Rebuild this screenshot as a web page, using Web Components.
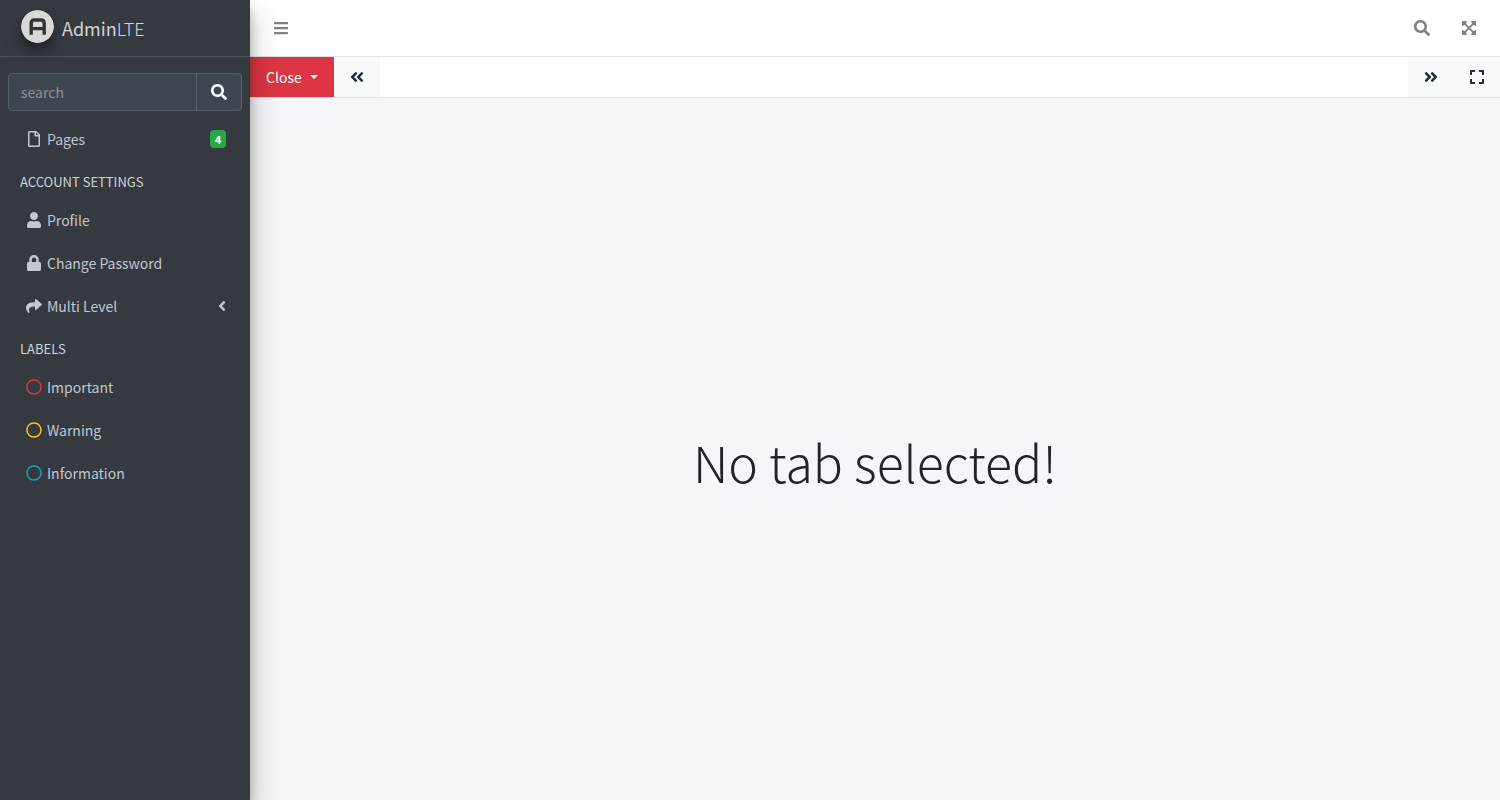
<!DOCTYPE html>
<html lang="en">
<head>
<meta charset="utf-8">
<meta name="viewport" content="width=device-width, initial-scale=1">
<title>AdminLTE</title>
<style>
  html, body { margin: 0; min-height: 100vh; }
  body {
    font-family: "Source Sans Pro", "Noto Sans CJK SC", "Noto Sans", sans-serif;
    font-size: 14px;
    line-height: 24px;
    color: #212529;
    background: #f4f6f9;
  }
</style>
</head>
<body>
<admin-layout>
  <admin-sidebar slot="sidebar">
    <nav-item icon="file" badge="4">Pages</nav-item>
    <nav-heading>ACCOUNT SETTINGS</nav-heading>
    <nav-item icon="user">Profile</nav-item>
    <nav-item icon="lock">Change Password</nav-item>
    <nav-item icon="share" expandable>Multi Level</nav-item>
    <nav-heading>LABELS</nav-heading>
    <nav-item icon="circle" tone="danger">Important</nav-item>
    <nav-item icon="circle" tone="warning">Warning</nav-item>
    <nav-item icon="circle" tone="info">Information</nav-item>
  </admin-sidebar>
  <top-navbar></top-navbar>
  <tab-bar></tab-bar>
  <empty-state>No tab selected!</empty-state>
</admin-layout>

<script>
const ICONS = {
  bars: [448, 'M16 132h416c8.8 0 16-7.2 16-16V76c0-8.8-7.2-16-16-16H16C7.2 60 0 67.2 0 76v40c0 8.8 7.2 16 16 16zm0 160h416c8.8 0 16-7.2 16-16v-40c0-8.8-7.2-16-16-16H16c-8.8 0-16 7.2-16 16v40c0 8.8 7.2 16 16 16zm0 160h416c8.8 0 16-7.2 16-16v-40c0-8.8-7.2-16-16-16H16c-8.8 0-16 7.2-16 16v40c0 8.8 7.2 16 16 16z'],
  search: [512, 'M505 442.7L405.3 343c-4.5-4.5-10.6-7-17-7H372c27.6-35.3 44-79.7 44-128C416 93.1 322.9 0 208 0S0 93.1 0 208s93.1 208 208 208c48.3 0 92.7-16.4 128-44v16.3c0 6.4 2.5 12.5 7 17l99.7 99.7c9.4 9.4 24.6 9.4 33.9 0l28.3-28.3c9.4-9.4 9.4-24.6.1-34zM208 336c-70.7 0-128-57.2-128-128 0-70.7 57.2-128 128-128 70.7 0 128 57.2 128 128 0 70.7-57.2 128-128 128z'],
  arrows: [448, 'M448 344v112a23.94 23.94 0 0 1-24 24H312c-21.39 0-32.09-25.9-17-41l36.2-36.2L224 295.6 116.77 402.9 153 439c15.09 15.1 4.39 41-17 41H24a23.94 23.94 0 0 1-24-24V344c0-21.4 25.89-32.1 41-17l36.19 36.2L184.46 256 77.18 148.7 41 185c-15.1 15.1-41 4.4-41-17V56a23.94 23.94 0 0 1 24-24h112c21.39 0 32.09 25.9 17 41l-36.2 36.2L224 216.4l107.23-107.3L295 73c-15.09-15.1-4.39-41 17-41h112a23.94 23.94 0 0 1 24 24v112c0 21.4-25.89 32.1-41 17l-36.19-36.2L263.54 256l107.28 107.3L407 327.1c15.1-15.2 41-4.5 41 16.9z'],
  expand: [448, 'M0 180V56c0-13.3 10.7-24 24-24h124c6.6 0 12 5.4 12 12v40c0 6.6-5.4 12-12 12H64v84c0 6.6-5.4 12-12 12H12c-6.6 0-12-5.4-12-12zM288 44v40c0 6.6 5.4 12 12 12h84v84c0 6.6 5.4 12 12 12h40c6.6 0 12-5.4 12-12V56c0-13.3-10.7-24-24-24H300c-6.6 0-12 5.4-12 12zm148 276h-40c-6.6 0-12 5.4-12 12v84h-84c-6.6 0-12 5.4-12 12v40c0 6.6 5.4 12 12 12h124c13.3 0 24-10.7 24-24V332c0-6.6-5.4-12-12-12zM160 468v-40c0-6.6-5.4-12-12-12H64v-84c0-6.6-5.4-12-12-12H12c-6.6 0-12 5.4-12 12v124c0 13.3 10.7 24 24 24h124c6.6 0 12-5.4 12-12z'],
  left2: [448, 'M223.7 239l136-136c9.4-9.4 24.6-9.4 33.9 0l22.6 22.6c9.4 9.4 9.4 24.6 0 33.9L319.9 256l96.4 96.4c9.4 9.4 9.4 24.6 0 33.9L393.7 409c-9.4 9.4-24.6 9.4-33.9 0l-136-136c-9.5-9.4-9.5-24.6-.1-34zm-192 34l136 136c9.4 9.4 24.6 9.4 33.9 0l22.6-22.6c9.4-9.4 9.4-24.6 0-33.9L127.9 256l96.4-96.4c9.4-9.4 9.4-24.6 0-33.9L201.7 103c-9.4-9.4-24.6-9.4-33.9 0l-136 136c-9.5 9.4-9.5 24.6-.1 34z'],
  right2: [448, 'M224.3 273l-136 136c-9.4 9.4-24.6 9.4-33.9 0l-22.6-22.6c-9.4-9.4-9.4-24.6 0-33.9l96.4-96.4-96.4-96.4c-9.4-9.4-9.4-24.6 0-33.9L54.3 103c9.4-9.4 24.6-9.4 33.9 0l136 136c9.5 9.4 9.5 24.6.1 34zm192-34l-136-136c-9.4-9.4-24.6-9.4-33.9 0l-22.6 22.6c-9.4 9.4-9.4 24.6 0 33.9l96.4 96.4-96.4 96.4c-9.4 9.4-9.4 24.6 0 33.9l22.6 22.6c9.4 9.4 24.6 9.4 33.9 0l136-136c9.4-9.2 9.4-24.4 0-33.8z'],
  left: [256, 'M31.7 239l136-136c9.4-9.4 24.6-9.4 33.9 0l22.6 22.6c9.4 9.4 9.4 24.6 0 33.9L127.9 256l96.4 96.4c9.4 9.4 9.4 24.6 0 33.9L201.7 409c-9.4 9.4-24.6 9.4-33.9 0l-136-136c-9.5-9.4-9.5-24.6-.1-34z'],
  file: [384, 'M369.9 97.9L286 14C277 5 264.8-.1 252.1-.1H48C21.5 0 0 21.5 0 48v416c0 26.500 21.500 48 48 48h288c26.500 0 48-21.500 48-48V131.900c0-12.700-5.100-25-14.100-34zM332.100 128H256V51.900l76.100 76.100zM48 464V48h160v104c0 13.300 10.700 24 24 24h104v288H48z'],
  user: [448, 'M224 256c70.7 0 128-57.300 128-128S294.700 0 224 0 96 57.300 96 128s57.300 128 128 128zm89.600 32h-16.700c-22.200 10.200-46.900 16-72.900 16s-50.600-5.800-72.900-16h-16.700C60.200 288 0 348.200 0 422.400V464c0 26.500 21.500 48 48 48h352c26.500 0 48-21.500 48-48v-41.600c0-74.200-60.200-134.400-134.400-134.400z'],
  lock: [448, 'M400 224h-24v-72C376 68.200 307.800 0 224 0S72 68.200 72 152v72H48c-26.500 0-48 21.500-48 48v192c0 26.500 21.500 48 48 48h352c26.500 0 48-21.500 48-48V272c0-26.500-21.500-48-48-48zm-104 0H152v-72c0-39.700 32.300-72 72-72s72 32.300 72 72v72z'],
  share: [512, 'M503.691 189.836L327.687 37.851C312.281 24.546 288 35.347 288 56.015v80.053C127.371 137.907 0 170.100 0 322.326c0 61.441 39.581 122.309 83.333 154.132 13.653 9.931 33.111-2.533 28.077-18.631C66.066 312.814 132.917 274.316 288 272.085V360c0 20.700 24.300 31.453 39.687 18.164l176.004-152c11.071-9.562 11.086-26.753 0-36.328z'],
  circle: [512, 'M256 8C119 8 8 119 8 256s111 248 248 248 248-111 248-248S393 8 256 8zm0 448c-110.500 0-200-89.500-200-200S145.500 56 256 56s200 89.500 200 200-89.500 200-200 200z']
};

class ShadowElement extends HTMLElement {
  connectedCallback() {
    if (this.shadowRoot) return;
    this.attachShadow({ mode: 'open' }).innerHTML = this.view();
  }
}

customElements.define('fa-icon', class extends ShadowElement {
  view() {
    const [w, d] = ICONS[this.getAttribute('name')];
    return `<style>:host{display:inline-flex;flex:none}svg{display:block;height:16px;fill:currentColor}</style>
      <svg viewBox="0 0 ${w} 512" width="${w / 32}" aria-hidden="true"><path d="${d}"/></svg>`;
  }
});

customElements.define('admin-layout', class extends ShadowElement {
  view() {
    return `<style>
      :host{display:flex;min-height:100vh}
      ::slotted(admin-sidebar){flex:none}
      main{flex:1;min-width:0;display:flex;flex-direction:column}
    </style>
    <slot name="sidebar"></slot><main><slot></slot></main>`;
  }
});

customElements.define('brand-link', class extends ShadowElement {
  view() {
    return `<style>
      :host{display:block;border-bottom:1px solid #4b545c}
      a{display:flex;align-items:center;gap:8px;height:56px;padding-left:21px;
        font-size:18px;color:rgba(255,255,255,.8);text-decoration:none}
      svg{flex:none;width:33px;height:33px;margin-bottom:3px;border-radius:50%;
        box-shadow:0 10px 20px rgba(0,0,0,.19),0 6px 6px rgba(0,0,0,.23)}
      .thin{font-weight:300}
    </style>
    <a href="#"><svg viewBox="0 0 33 33" aria-hidden="true">
      <circle cx="16.500" cy="16.500" r="16.500" fill="#d8d9da"/>
      <path d="M10.200 24.800V13.200Q10.200 10 13.400 10H20Q23.200 10 23.200 13.200V24.800M10.200 18.600H23.200" fill="none" stroke="#303335" stroke-width="3.400"/>
      <path d="M11 12.300Q11.300 11 13 11H20.400Q22.100 11 22.400 12.300" fill="none" stroke="#55585a" stroke-width=".6"/>
    </svg><span>Admin<span class="thin">LTE</span></span></a>`;
  }
});

customElements.define('sidebar-search', class extends ShadowElement {
  view() {
    return `<style>
      :host{display:block}
      form{display:flex;height:36px;margin:0;border:1px solid #56606a;border-radius:4px;background:#3f474e;overflow:hidden}
      input{flex:1;min-width:0;border:0;padding:0 12px;background:none;font:inherit;color:#fff;outline:0}
      input::placeholder{color:#8b9298;opacity:1}
      button{display:flex;align-items:center;justify-content:center;width:45px;padding:0;border:0;
        border-left:1px solid #56606a;background:none;color:#fff}
    </style>
    <form role="search"><input type="search" placeholder="search" aria-label="Search">
    <button type="button" aria-label="Search"><fa-icon name="search"></fa-icon></button></form>`;
  }
});

customElements.define('nav-heading', class extends ShadowElement {
  view() {
    return `<style>:host{display:block;padding:8px 12px 6px;font-size:13px;color:#d0d4db}</style><slot></slot>`;
  }
});

customElements.define('nav-item', class extends ShadowElement {
  view() {
    const badge = this.getAttribute('badge');
    return `<style>
      :host{display:block;margin-bottom:3px}
      a{display:flex;align-items:center;height:40px;padding:0 16px;color:#c2c7d0;text-decoration:none}
      .icon{display:flex;justify-content:center;width:20px;margin-right:3px}
      .text{flex:1}
      :host([tone=danger]) .icon{color:#dc3545}
      :host([tone=warning]) .icon{color:#ffc107}
      :host([tone=info]) .icon{color:#17a2b8}
      .badge{width:16px;height:18px;border-radius:4px;background:#28a745;color:#fff;
        font-size:11px;font-weight:700;line-height:18px;text-align:center}
    </style>
    <a href="#"><span class="icon"><fa-icon name="${this.getAttribute('icon')}"></fa-icon></span>
      <span class="text"><slot></slot></span>
      ${badge ? `<span class="badge">${badge}</span>` : ''}
      ${this.hasAttribute('expandable') ? '<fa-icon name="left"></fa-icon>' : ''}</a>`;
  }
});

customElements.define('admin-sidebar', class extends ShadowElement {
  view() {
    return `<style>
      :host{display:block;position:relative;z-index:1;width:250px;background:#343a40;
        box-shadow:0 14px 28px rgba(0,0,0,.25),0 10px 10px rgba(0,0,0,.22)}
      .body{padding:16px 8px 0}
      nav{margin-top:8px}
    </style>
    <brand-link></brand-link>
    <div class="body"><sidebar-search></sidebar-search><nav><slot></slot></nav></div>`;
  }
});

customElements.define('top-navbar', class extends ShadowElement {
  view() {
    return `<style>
      :host{display:flex;align-items:center;justify-content:space-between;height:56px;padding:0 8px;
        background:#fff;border-bottom:1px solid #dee2e6}
      div{display:flex}
      button{display:flex;padding:12px 16px;border:0;background:none;color:#808080}
    </style>
    <button type="button" aria-label="Toggle menu"><fa-icon name="bars"></fa-icon></button>
    <div><button type="button" aria-label="Search"><fa-icon name="search"></fa-icon></button>
    <button type="button" aria-label="Full screen"><fa-icon name="arrows"></fa-icon></button></div>`;
  }
});

customElements.define('tab-bar', class extends ShadowElement {
  view() {
    return `<style>
      :host{display:flex;height:40px;background:#fff;border-bottom:1px solid #dee2e6}
      button{display:flex;align-items:center;padding:0 16px;border:0;background:#f8f9fa;color:#1f2d3d;font:inherit}
      .close{gap:8px;background:#dc3545;color:#fff}
      .caret{border:4px solid transparent;border-top-color:#fff;border-bottom:0}
      .tabs{flex:1}
    </style>
    <button class="close" type="button" aria-haspopup="true">Close<span class="caret"></span></button>
    <button type="button" aria-label="Scroll left"><fa-icon name="left2"></fa-icon></button>
    <div class="tabs" role="tablist"></div>
    <button type="button" aria-label="Scroll right"><fa-icon name="right2"></fa-icon></button>
    <button type="button" aria-label="Expand"><fa-icon name="expand"></fa-icon></button>`;
  }
});

customElements.define('empty-state', class extends ShadowElement {
  view() {
    return `<style>
      :host{flex:1;display:flex;align-items:center;justify-content:center;padding-top:24px}
      h2{margin:0;font-size:50px;font-weight:300;line-height:68px}
    </style><h2><slot></slot></h2>`;
  }
});
</script>
</body>
</html>
